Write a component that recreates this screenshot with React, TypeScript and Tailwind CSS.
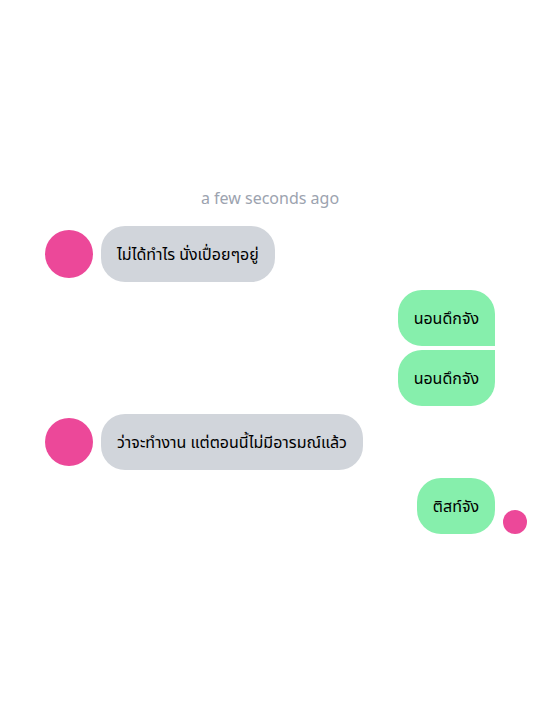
const Avatar = ({ small }: { small?: boolean }) => (
  <div className={small ? "w-6 h-6 rounded-full bg-[#ec4899]" : "w-12 h-12 shrink-0 rounded-full bg-[#ec4899]"} />
);

const Left = ({ text }: { text: string }) => (
  <div className="flex items-center gap-2">
    <Avatar />
    <div className="bg-[#d1d5db] rounded-3xl px-4 py-4 text-base leading-6 text-black">{text}</div>
  </div>
);

const App = () => {
  return (
    <main className="min-h-screen flex justify-center items-center bg-white font-['Noto_Sans','Noto_Sans_Thai',sans-serif]">
      <div className="w-[450px] flex flex-col">
        <p className="text-center text-[#9ca3af] text-base leading-6 mb-4">a few seconds ago</p>
        <Left text="ไม่ได้ทำไร นั่งเปื่อยๆอยู่" />
        <div className="flex flex-col items-end gap-1 mt-2">
          <div className="bg-[#86efac] rounded-3xl rounded-br-none px-4 py-4 text-base leading-6 text-black">นอนดึกจัง</div>
          <div className="bg-[#86efac] rounded-3xl rounded-tr-none px-4 py-4 text-base leading-6 text-black">นอนดึกจัง</div>
        </div>
        <div className="mt-2">
          <Left text="ว่าจะทำงาน แต่ตอนนี้ไม่มีอารมณ์แล้ว" />
        </div>
        <div className="flex justify-end mt-2">
          <div className="relative bg-[#86efac] rounded-3xl px-4 py-4 text-base leading-6 text-black">
            ติสท์จัง
            <div className="absolute -right-8 bottom-0">
              <Avatar small />
            </div>
          </div>
        </div>
      </div>
    </main>
  );
};

export default App;
